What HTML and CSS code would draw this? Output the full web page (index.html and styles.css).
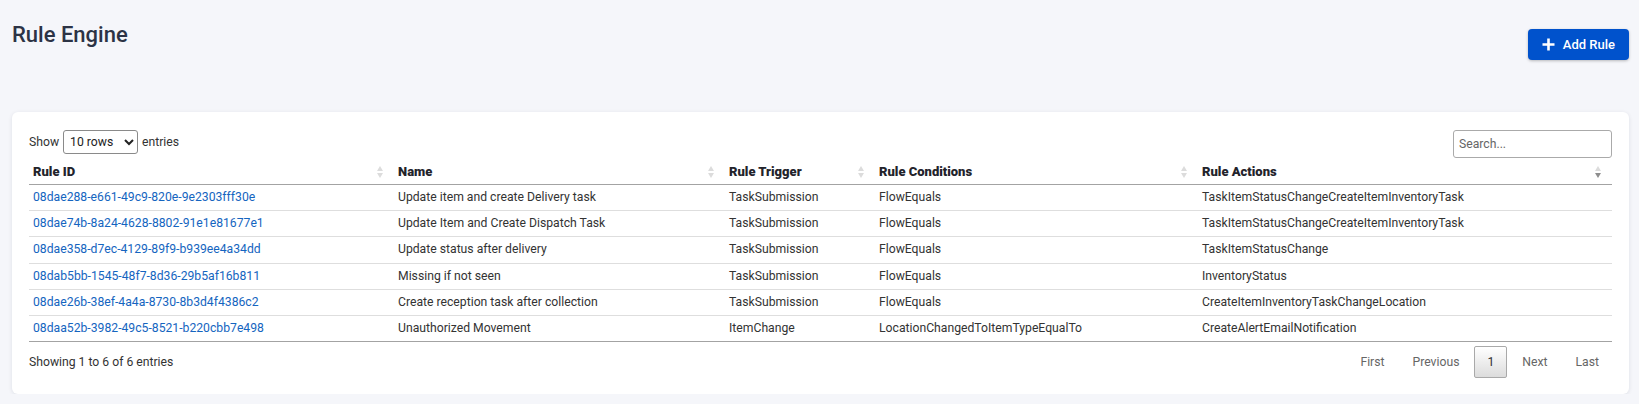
FILE: index.html
```html
<!DOCTYPE html>
<html lang="en">
<head>
<meta charset="utf-8">
<title>Rule Engine</title>
<link rel="stylesheet" href="styles.css">
</head>
<body>
<div class="page">
  <header class="page-header">
    <h1 class="page-title">Rule Engine</h1>
    <button class="btn-primary" type="button">
      <svg class="btn-icon" width="13" height="13" viewBox="0 0 13 13" aria-hidden="true"><path d="M6.5 0.5v12M0.5 6.5h12" stroke="#fff" stroke-width="2.6" fill="none"/></svg>
      <span>Add Rule</span>
    </button>
  </header>

  <section class="card">
    <div class="toolbar">
      <label class="length">
        <span>Show</span>
        <select class="length-select">
          <option>10 rows</option>
          <option>25 rows</option>
          <option>50 rows</option>
        </select>
        <span>entries</span>
      </label>
      <input class="search" type="search" placeholder="Search...">
    </div>

    <table class="grid">
      <colgroup>
        <col class="c-id"><col class="c-name"><col class="c-trigger"><col class="c-cond"><col class="c-act">
      </colgroup>
      <thead>
        <tr>
          <th><div class="th-in"><span>Rule ID</span><i class="sort"></i></div></th>
          <th><div class="th-in"><span>Name</span><i class="sort"></i></div></th>
          <th><div class="th-in"><span>Rule Trigger</span><i class="sort"></i></div></th>
          <th><div class="th-in"><span>Rule Conditions</span><i class="sort"></i></div></th>
          <th><div class="th-in"><span>Rule Actions</span><i class="sort sort-desc"></i></div></th>
        </tr>
      </thead>
      <tbody>
        <tr><td><a href="#">08dae288-e661-49c9-820e-9e2303fff30e</a></td><td>Update item and create Delivery task</td><td>TaskSubmission</td><td>FlowEquals</td><td>TaskItemStatusChangeCreateItemInventoryTask</td></tr>
        <tr><td><a href="#">08dae74b-8a24-4628-8802-91e1e81677e1</a></td><td>Update Item and Create Dispatch Task</td><td>TaskSubmission</td><td>FlowEquals</td><td>TaskItemStatusChangeCreateItemInventoryTask</td></tr>
        <tr><td><a href="#">08dae358-d7ec-4129-89f9-b939ee4a34dd</a></td><td>Update status after delivery</td><td>TaskSubmission</td><td>FlowEquals</td><td>TaskItemStatusChange</td></tr>
        <tr><td><a href="#">08dab5bb-1545-48f7-8d36-29b5af16b811</a></td><td>Missing if not seen</td><td>TaskSubmission</td><td>FlowEquals</td><td>InventoryStatus</td></tr>
        <tr><td><a href="#">08dae26b-38ef-4a4a-8730-8b3d4f4386c2</a></td><td>Create reception task after collection</td><td>TaskSubmission</td><td>FlowEquals</td><td>CreateItemInventoryTaskChangeLocation</td></tr>
        <tr><td><a href="#">08daa52b-3982-49c5-8521-b220cbb7e498</a></td><td>Unauthorized Movement</td><td>ItemChange</td><td>LocationChangedToItemTypeEqualTo</td><td>CreateAlertEmailNotification</td></tr>
      </tbody>
    </table>

    <div class="footer">
      <div class="info">Showing 1 to 6 of 6 entries</div>
      <nav class="pager">
        <a class="pg" href="#">First</a>
        <a class="pg" href="#">Previous</a>
        <a class="pg pg-current" href="#">1</a>
        <a class="pg" href="#">Next</a>
        <a class="pg" href="#">Last</a>
      </nav>
    </div>
  </section>
</div>
</body>
</html>
```

FILE: styles.css
```css
* { box-sizing: border-box; }

html, body {
  margin: 0;
  padding: 0;
  background: #f5f6fa;
  font-family: Roboto, "Liberation Sans", Arial, sans-serif;
  color: #333;
}

.page {
  padding: 0 10px 0 12px;
}

.page-header {
  display: flex;
  justify-content: space-between;
  align-items: flex-start;
  height: 112px;
}

.page-title {
  margin: 22px 0 0 0;
  font-size: 22px;
  line-height: 26px;
  font-weight: 500;
  color: #2c3345;
}

.btn-primary {
  margin-top: 29px;
  display: inline-flex;
  align-items: center;
  gap: 8px;
  height: 31px;
  padding: 0 14px;
  border: none;
  border-radius: 4px;
  background: #0052cc;
  color: #fff;
  font-family: inherit;
  font-size: 13px;
  font-weight: 500;
  white-space: nowrap;
  box-shadow: 0 1px 3px rgba(0, 0, 0, 0.25);
  cursor: pointer;
}

.btn-icon { display: block; flex: none; }

.card {
  background: #fff;
  border-radius: 6px;
  box-shadow: 0 1px 4px rgba(20, 30, 60, 0.10);
  padding: 18px 17px 17px 17px;
  height: 282px;
}

.toolbar {
  display: flex;
  justify-content: space-between;
  align-items: flex-start;
  margin-bottom: 2px;
  font-size: 12.2px;
}

.length {
  display: inline-flex;
  align-items: center;
  gap: 4px;
  height: 24px;
  color: #333;
}

.length-select {
  width: 75px;
  height: 24px;
  border: 1px solid #8a8a8a;
  border-radius: 3px;
  background: #fff;
  font-family: inherit;
  font-size: 12.2px;
  color: #222;
  padding: 0 2px;
}

.search {
  width: 159px;
  height: 28px;
  border: 1px solid #aaa;
  border-radius: 3px;
  padding: 0 5px;
  font-family: inherit;
  font-size: 12.2px;
  color: #333;
  outline: none;
}

.search::placeholder { color: #666; }

.grid {
  width: 100%;
  table-layout: fixed;
  border-collapse: collapse;
  font-size: 12.2px;
}

.c-id { width: 365px; }
.c-name { width: 331px; }
.c-trigger { width: 150px; }
.c-cond { width: 323px; }
.c-act { width: 414px; }

.grid th {
  text-align: left;
  font-size: 13px;
  font-weight: 900;
  color: #23232b;
  padding: 4px 10px 4px 4px;
  line-height: 16px;
  border-bottom: 1px solid #a3a3a3;
}

.th-in {
  display: flex;
  justify-content: space-between;
  align-items: center;
}

.sort {
  display: inline-flex;
  flex-direction: column;
  gap: 2px;
  width: 7px;
}

.sort::before,
.sort::after {
  content: "";
  display: block;
  width: 0;
  height: 0;
  border-left: 3.5px solid transparent;
  border-right: 3.5px solid transparent;
}

.sort::before { border-bottom: 5px solid #dcdcdc; }
.sort::after { border-top: 5px solid #dcdcdc; }
.sort-desc::after { border-top-color: #8e8e8e; }

.grid td {
  padding: 5px 4px;
  line-height: 15.2px;
  border-bottom: 1px solid #dedede;
  color: #333;
  white-space: nowrap;
  overflow: hidden;
}

.grid tbody tr:last-child td { border-bottom-color: #a3a3a3; }

.grid a {
  color: #1565c0;
  text-decoration: none;
}

.footer {
  display: flex;
  justify-content: space-between;
  align-items: center;
  margin-top: 4px;
  font-size: 12.2px;
}

.info { color: #333; }

.pager {
  display: flex;
  align-items: center;
}

.pg {
  display: inline-flex;
  align-items: center;
  height: 32px;
  padding: 0 12px;
  margin-left: 2px;
  border: 1px solid transparent;
  border-radius: 2px;
  color: #666;
  text-decoration: none;
}

.pg-current {
  border-color: #a9a9a9;
  background: linear-gradient(to bottom, #ffffff 0%, #dcdcdc 100%);
  color: #333;
}
```
